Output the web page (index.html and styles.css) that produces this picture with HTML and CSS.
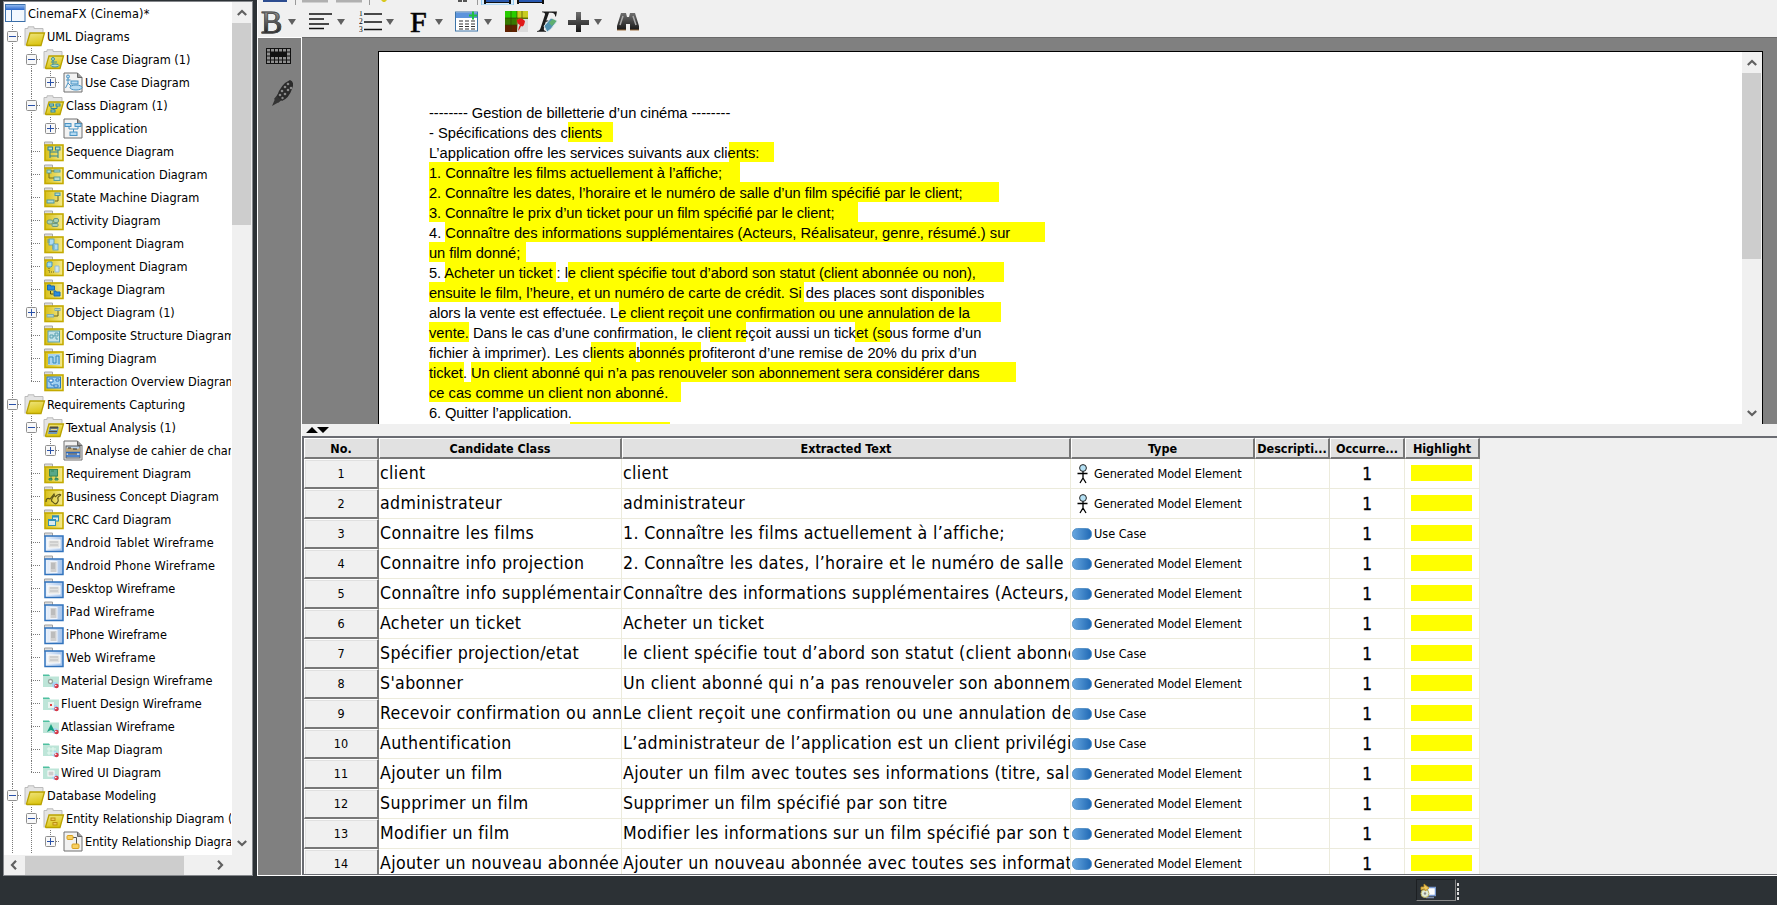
FILE: index.html
```
<!DOCTYPE html>
<html lang="fr">
<head>
<meta charset="utf-8">
<title>CinemaFX</title>
<link rel="stylesheet" href="styles.css">
</head>
<body>
<svg class="defs" width="0" height="0" aria-hidden="true">
  <defs>
    <linearGradient id="gy" x1="0" x2="1"><stop offset="0" stop-color="#d8c018"/><stop offset="1" stop-color="#f4ea90"/></linearGradient>
    <linearGradient id="gyo" x1="0" y1="0" x2="0.3" y2="1"><stop offset="0" stop-color="#efe580"/><stop offset="1" stop-color="#dcc616"/></linearGradient>
    <linearGradient id="gb" x1="0" x2="1"><stop offset="0" stop-color="#f0f5fc"/><stop offset="1" stop-color="#a3c2ea"/></linearGradient>
    <linearGradient id="gbl" x1="0" x2="1"><stop offset="0" stop-color="#68a8e0"/><stop offset="1" stop-color="#1f68b4"/></linearGradient>
    <linearGradient id="gw" x1="0" x2="0" y1="0" y2="1"><stop offset="0" stop-color="#8fb8f0"/><stop offset="1" stop-color="#2866cc"/></linearGradient>
    <linearGradient id="gk" x1="0" x2="0" y1="0" y2="1"><stop offset="0" stop-color="#707070"/><stop offset="1" stop-color="#181818"/></linearGradient>
  </defs>
  <symbol id="folder" viewBox="0 0 22 22"><path d="M1.5 4.500v-3.500h8v3.500z" fill="#ddd" stroke="#a8a8a8"/><rect x="2" y="4" width="18" height="15.500" fill="url(#gy)" stroke="#c4aa00" stroke-width="1.600"/></symbol>
  <symbol id="bfolder" viewBox="0 0 22 22"><path d="M1.500 4.500v-3.500h8v3.500z" fill="#ddd" stroke="#a0a0a0"/><rect x="2" y="4" width="18" height="15.500" fill="url(#gb)" stroke="#3173bd" stroke-width="1.500"/></symbol>
  <symbol id="open" viewBox="0 0 22 22"><path d="M1 19.500V2.500h3V.8h6v1.700h9V8" fill="#e4e4e4" stroke="#bcbcbc"/><path d="M2.500 19 6 7h14.500L17 19.500H3z" fill="url(#gyo)" stroke="#b9a200" stroke-width="1.300"/></symbol>
  <symbol id="doc" viewBox="0 0 22 22"><path d="M1 1h13.500L19 5.500V20H1z" fill="#f2f2f2" stroke="#707070"/><path d="M14.500 1v4.500H19" fill="#999" stroke="#666"/></symbol>
  <symbol id="green" viewBox="0 0 18 18"><path d="M0 3h6l1 1.500h9V15H0z" fill="#bde5d8"/><path d="M0 2.500h6l1 1.500H0z" fill="#4fc0a0"/><path d="M9 11q5-3 7 3-4 4-7 0z" fill="#a8d4f4"/><circle cx="13.500" cy="14" r="2.200" fill="#d83848"/><circle cx="12.800" cy="13.500" r=".8" fill="#fff"/></symbol>
  <symbol id="proj" viewBox="0 0 22 22"><rect x=".5" y="1.500" width="19.500" height="17" fill="#f2f8ff" stroke="#3a6ea8"/><rect x="1" y="2" width="18.500" height="5" fill="url(#gw)"/><path d="M6.500 7v11" stroke="#3a6ea8"/></symbol>
  <symbol id="minus" viewBox="0 0 11 11"><rect x=".5" y=".5" width="10" height="10" rx="1" fill="#f8f8f8" stroke="#8f8f8f"/><path d="M2 5.500h7" stroke="#2850a8"/></symbol>
  <symbol id="plus" viewBox="0 0 11 11"><rect x=".5" y=".5" width="10" height="10" rx="1" fill="#f8f8f8" stroke="#8f8f8f"/><path d="M2 5.500h7M5.500 2v7" stroke="#2850a8"/></symbol>
  <symbol id="o-uc" viewBox="0 0 22 22"><g fill="#b8dcf2" stroke="#4a94c4"><circle cx="5" cy="4.500" r="1.500"/><path d="M5 6v5M3 8h4.500M5 11l-2.500 5M5 11l3 3M8 10h6" fill="none"/><ellipse cx="13" cy="15.500" rx="6" ry="2.500"/><rect x="8" y="9" width="7" height="3"/></g></symbol>
  <symbol id="o-cls" viewBox="0 0 22 22"><g fill="#b4daf2" stroke="#4a94c4"><path d="M6 8v3h9V8M10.500 11v4" fill="none"/><rect x="2" y="5.500" width="6" height="3"/><rect x="12" y="5.500" width="6" height="3"/><rect x="7" y="14" width="7" height="3.500"/></g></symbol>
  <symbol id="o-ucf" viewBox="0 0 22 22"><g fill="#b8dcc4" stroke="#3c90a0"><circle cx="10" cy="10" r="1.500"/><path d="M10 11.500v4M8 13h6" fill="none"/><ellipse cx="12" cy="16.500" rx="4" ry="1.500"/></g></symbol>
  <symbol id="o-clsf" viewBox="0 0 22 22"><g fill="#b8dcc4" stroke="#2c84a0"><path d="M8 11v2.500h6V11M11 13v3" fill="none"/><rect x="6.500" y="9" width="4" height="2"/><rect x="13" y="9" width="4" height="2"/><rect x="8" y="15" width="4" height="2"/></g></symbol>
  <symbol id="o-seq" viewBox="0 0 22 22"><g fill="#b8dccc" stroke="#2c8098"><rect x="5" y="6" width="4.500" height="3"/><rect x="12.500" y="6" width="4.500" height="3"/><path d="M7 9v8M15 9v8M7 11h8M7 15h8" fill="none"/></g></symbol>
  <symbol id="o-com" viewBox="0 0 22 22"><g fill="#b8dcd0" stroke="#54a0a0"><rect x="4" y="6" width="4" height="3"/><rect x="11" y="6" width="6" height="2"/><rect x="11" y="13" width="6" height="3.500"/><path d="M6 9v5h5M8 7h3" fill="none" stroke="#77701c"/></g></symbol>
  <symbol id="o-st" viewBox="0 0 22 22"><g fill="#b8dcd0" stroke="#4a98a8"><rect x="12" y="6" width="5" height="2.500"/><rect x="4" y="13" width="7" height="3"/><path d="M15 9v5h-3" fill="none" stroke="#666018"/></g></symbol>
  <symbol id="o-act" viewBox="0 0 22 22"><g fill="#a8d0b8" stroke="#6a9880"><rect x="4" y="10" width="6" height="4" rx="2"/><rect x="10.500" y="8.500" width="5" height="4" rx="1.500"/><rect x="9" y="13.500" width="6" height="3" rx="1"/></g></symbol>
  <symbol id="o-cmp" viewBox="0 0 22 22"><g fill="#b0dcf0" stroke="#5098b8" stroke-width=".8"><rect x="6" y="6" width="5" height="6"/><rect x="10" y="11" width="5" height="6"/><path d="M4 7h3M4 9h3M9 13h3M9 15h3"/></g></symbol>
  <symbol id="o-dep" viewBox="0 0 22 22"><g fill="#a0dcec" stroke="#4a98b8"><path d="M4 7l1-1h4v4l-1 1H4z"/><path d="M12 10h4v6h-4z" stroke="#98bcd0" fill="#d0e8f4"/><path d="M6 12v4h6" fill="none" stroke="#666018" stroke-dasharray="1 1"/></g></symbol>
  <symbol id="o-pkg" viewBox="0 0 22 22"><g fill="#2c8cdc" stroke="#1868b0"><path d="M4.500 6h3v1h4v4h-7zM11 12h2v1h4v4h-6z"/><path d="M7.500 12v3h3" fill="none" stroke="#504c10"/></g></symbol>
  <symbol id="o-obj" viewBox="0 0 22 22"><g fill="#b0d4cc" stroke="#80acb0"><rect x="12" y="6.500" width="5" height="2"/><rect x="4" y="12.500" width="6.500" height="2.500"/><path d="M15 9v5h-4" fill="none" stroke="#666018"/></g></symbol>
  <symbol id="o-cst" viewBox="0 0 22 22"><g fill="#c4e2e8" stroke="#58a0b0"><rect x="5" y="6" width="11.500" height="11"/><path d="M7 10h3v3H7zM12 8h3v3h-3zM12 13h2v2M10 11h2"/></g></symbol>
  <symbol id="o-tim" viewBox="0 0 22 22"><rect x="5" y="6" width="12" height="11" fill="#a8d4f0"/><path d="M6 16V9h4v6h3V8h3v8" fill="none" stroke="#3488b8"/></symbol>
  <symbol id="o-int" viewBox="0 0 22 22"><rect x="4" y="6" width="13.500" height="11" fill="#a0d0f0" stroke="#2878c0"/><path d="M6 8h4v3H6zM13 8h3v2h-3zM11 14h4v2h-4zM8 11v3h3" fill="#fff" stroke="#2878c0"/></symbol>
  <symbol id="o-txf" viewBox="0 0 22 22"><path d="M6.500 10h9.500l-2 7H5z" fill="#7098b8"/><path d="M7 9.500h8v2H6.500zM6 14h8v1H6z" fill="#504c40"/><path d="M8 12.500h6" stroke="#e8d890"/></symbol>
  <symbol id="o-tx" viewBox="0 0 22 22"><rect x="3" y="6" width="14" height="12" fill="#bcd4ee" stroke="#555"/><path d="M3 9c4-4 8 2 14-1v4H3z" fill="#c0a878"/><path d="M3 12.500h14M3 16h14" stroke="#2868c0" stroke-width="1.500"/><path d="M5 8h3M10 9h4M5 14h9" stroke="#333"/></symbol>
  <symbol id="o-req" viewBox="0 0 22 22"><g fill="#58a888" stroke="#388858"><rect x="6.500" y="6.500" width="8" height="6.500"/><path d="M8 13v2M13 13v2M6 15.500h3v1.500H6zM12 15.500h3v1.500h-3zM8 8h3"/></g></symbol>
  <symbol id="o-bus" viewBox="0 0 22 22"><path d="M3 16q0-5 4-3l4-5q1 2-1 3-3 4 0 5M12 11q4-4 6-2M18 9q-4 2-3 4t-1 4-4-1" fill="none" stroke="#5c5418" stroke-width="1.200"/></symbol>
  <symbol id="o-crc" viewBox="0 0 22 22"><g fill="#d8eaf0" stroke="#3090b8"><rect x="9.500" y="7" width="6" height="5"/><rect x="5.500" y="10.500" width="7" height="6"/><path d="M9 7.500h7M5 11h8" stroke-width="2"/></g></symbol>
  <symbol id="o-w1" viewBox="0 0 22 22"><rect x="5" y="8" width="12" height="8" fill="#e2e2e0" stroke="#fff"/><path d="M7 10h8M7 13h8" stroke="#bcbcbc"/></symbol>
  <symbol id="o-w2" viewBox="0 0 22 22"><rect x="7" y="6.500" width="7" height="11" fill="#d0d0d0" stroke="#f0f4fa"/><path d="M8 9h4M8 11h4M8 13h4" stroke="#a8a8a8"/></symbol>
  <symbol id="o-m" viewBox="0 0 18 18"><circle cx="7.500" cy="9.500" r="2" fill="#fff" stroke="#98a8a0" stroke-width="1.300"/></symbol>
  <symbol id="o-f" viewBox="0 0 18 18"><rect x="5" y="7" width="6" height="6" fill="#e8f4f0"/><rect x="7" y="9" width="2" height="2" fill="#e04040"/></symbol>
  <symbol id="o-a" viewBox="0 0 18 18"><path d="M4 14l4-8 4 8-4-2z" fill="#18a080"/></symbol>
  <symbol id="o-s" viewBox="0 0 18 18"><path d="M6 6v8M10 6v8M4 8h9M4 12h9" stroke="#e4f8f0"/></symbol>
  <symbol id="o-wi" viewBox="0 0 18 18"><rect x="5" y="7" width="6" height="5" fill="#ccc" stroke="#fff"/></symbol>
  <symbol id="o-erf" viewBox="0 0 22 22"><g fill="#ecca60" stroke="#bc9010"><rect x="8" y="10" width="4" height="2.500"/><rect x="10" y="14.500" width="4" height="2.500"/></g></symbol>
  <symbol id="o-er" viewBox="0 0 22 22"><g fill="#f8d060" stroke="#d8a020"><path d="M10 6.500h3.500V13" fill="none" stroke="#555"/><rect x="4" y="4.500" width="6" height="4" rx="1"/><rect x="9" y="13" width="7" height="4.500" rx="1"/></g></symbol>
  <symbol id="actor" viewBox="0 0 20 20"><circle cx="11" cy="4" r="3.400" fill="#b4e0f4" stroke="#222"/><path d="M11 7.500v7M5.500 9.500h10M11 14l-3 5M11 14l3 5" stroke="#000" stroke-width="1.300" fill="none"/></symbol>
  <symbol id="oval" viewBox="0 0 20 20"><rect x=".5" y="4.500" width="19" height="11" rx="5" fill="url(#gbl)" stroke="#4888c0" stroke-width=".8"/></symbol>
  <symbol id="dd" viewBox="0 0 8 6"><path d="M0 0h8L4 6z" fill="#606060"/></symbol>
  <symbol id="up" viewBox="0 0 10 8"><path d="M.8 6 5 2l4.200 4" fill="none" stroke="#606060" stroke-width="2.200"/></symbol>
  <symbol id="down" viewBox="0 0 10 8"><path d="M.8 2 5 6l4.200-4" fill="none" stroke="#606060" stroke-width="2.200"/></symbol>
</svg>

<div class="app">
  <div class="work">
    <aside class="side">
      <div class="side-top">
        <ul class="tree">
          <li class="root"><svg><use href="#proj"/></svg>CinemaFX (Cinema)*</li>
          <li><i class="x"><svg><use href="#minus"/></svg></i><svg><use href="#open"/></svg>UML Diagrams</li>
          <li><i class="v"></i><i class="x"><svg><use href="#minus"/></svg></i><svg><use href="#open"/><use href="#o-ucf"/></svg>Use Case Diagram (1)</li>
          <li><i class="v"></i><i class="v"></i><i class="x last"><svg><use href="#plus"/></svg></i><svg class="doc"><use href="#doc"/><use href="#o-uc"/></svg>Use Case Diagram</li>
          <li><i class="v"></i><i class="x"><svg><use href="#minus"/></svg></i><svg><use href="#open"/><use href="#o-clsf"/></svg>Class Diagram (1)</li>
          <li><i class="v"></i><i class="v"></i><i class="x last"><svg><use href="#plus"/></svg></i><svg class="doc"><use href="#doc"/><use href="#o-cls"/></svg>application</li>
          <li><i class="v"></i><i class="t"></i><svg><use href="#folder"/><use href="#o-seq"/></svg>Sequence Diagram</li>
          <li><i class="v"></i><i class="t"></i><svg><use href="#folder"/><use href="#o-com"/></svg>Communication Diagram</li>
          <li><i class="v"></i><i class="t"></i><svg><use href="#folder"/><use href="#o-st"/></svg>State Machine Diagram</li>
          <li><i class="v"></i><i class="t"></i><svg><use href="#folder"/><use href="#o-act"/></svg>Activity Diagram</li>
          <li><i class="v"></i><i class="t"></i><svg><use href="#folder"/><use href="#o-cmp"/></svg>Component Diagram</li>
          <li><i class="v"></i><i class="t"></i><svg><use href="#folder"/><use href="#o-dep"/></svg>Deployment Diagram</li>
          <li><i class="v"></i><i class="t"></i><svg><use href="#folder"/><use href="#o-pkg"/></svg>Package Diagram</li>
          <li><i class="v"></i><i class="x"><svg><use href="#plus"/></svg></i><svg><use href="#folder"/><use href="#o-obj"/></svg>Object Diagram (1)</li>
          <li><i class="v"></i><i class="t"></i><svg><use href="#folder"/><use href="#o-cst"/></svg>Composite Structure Diagram</li>
          <li><i class="v"></i><i class="t"></i><svg><use href="#folder"/><use href="#o-tim"/></svg>Timing Diagram</li>
          <li><i class="v"></i><i class="t last"></i><svg><use href="#folder"/><use href="#o-int"/></svg>Interaction Overview Diagram</li>
          <li><i class="x"><svg><use href="#minus"/></svg></i><svg><use href="#open"/></svg>Requirements Capturing</li>
          <li><i class="v"></i><i class="x"><svg><use href="#minus"/></svg></i><svg><use href="#open"/><use href="#o-txf"/></svg>Textual Analysis (1)</li>
          <li><i class="v"></i><i class="v"></i><i class="x last"><svg><use href="#plus"/></svg></i><svg class="doc"><use href="#doc"/><use href="#o-tx"/></svg>Analyse de cahier de charge</li>
          <li><i class="v"></i><i class="t"></i><svg><use href="#folder"/><use href="#o-req"/></svg>Requirement Diagram</li>
          <li><i class="v"></i><i class="t"></i><svg><use href="#folder"/><use href="#o-bus"/></svg>Business Concept Diagram</li>
          <li><i class="v"></i><i class="t"></i><svg><use href="#folder"/><use href="#o-crc"/></svg>CRC Card Diagram</li>
          <li class="wide"><i class="v"></i><i class="t"></i><svg><use href="#bfolder"/><use href="#o-w1"/></svg>Android Tablet Wireframe</li>
          <li class="wide"><i class="v"></i><i class="t"></i><svg><use href="#bfolder"/><use href="#o-w2"/></svg>Android Phone Wireframe</li>
          <li><i class="v"></i><i class="t"></i><svg><use href="#bfolder"/><use href="#o-w1"/></svg>Desktop Wireframe</li>
          <li class="wide"><i class="v"></i><i class="t"></i><svg><use href="#bfolder"/><use href="#o-w2"/></svg>iPad Wireframe</li>
          <li><i class="v"></i><i class="t"></i><svg><use href="#bfolder"/><use href="#o-w2"/></svg>iPhone Wireframe</li>
          <li class="wide"><i class="v"></i><i class="t"></i><svg><use href="#bfolder"/><use href="#o-w1"/></svg>Web Wireframe</li>
          <li><i class="v"></i><i class="t"></i><svg class="sm"><use href="#green"/><use href="#o-m"/></svg>Material Design Wireframe</li>
          <li><i class="v"></i><i class="t"></i><svg class="sm"><use href="#green"/><use href="#o-f"/></svg>Fluent Design Wireframe</li>
          <li><i class="v"></i><i class="t"></i><svg class="sm"><use href="#green"/><use href="#o-a"/></svg>Atlassian Wireframe</li>
          <li><i class="v"></i><i class="t"></i><svg class="sm"><use href="#green"/><use href="#o-s"/></svg>Site Map Diagram</li>
          <li><i class="v"></i><i class="t last"></i><svg class="sm"><use href="#green"/><use href="#o-wi"/></svg>Wired UI Diagram</li>
          <li><i class="x"><svg><use href="#minus"/></svg></i><svg><use href="#open"/></svg>Database Modeling</li>
          <li><i class="v"></i><i class="x"><svg><use href="#minus"/></svg></i><svg><use href="#open"/><use href="#o-erf"/></svg>Entity Relationship Diagram (1)</li>
          <li><i class="v"></i><i class="v"></i><i class="x last"><svg><use href="#plus"/></svg></i><svg class="doc"><use href="#doc"/><use href="#o-er"/></svg>Entity Relationship Diagram</li>
        </ul>
        <div class="vbar"><svg><use href="#up"/></svg><span class="thumb"></span><svg><use href="#down"/></svg></div>
      </div>
      <div class="hbar"><svg class="left"><use href="#up"/></svg><span class="thumb"></span><svg class="right"><use href="#up"/></svg></div>
    </aside>

    <main class="main">
      <header class="tools">
        <svg class="cut" width="400" height="5" viewBox="0 0 400 5">
          <path d="M5 0h24v2H5z" fill="#2c4c90"/><path d="M37.500 0v5M111.500 0v5M219.500 0v5" stroke="#999"/>
          <path d="M44 0h26v2.500H44zM78 0h26v2.500H78z" fill="#b0b0b0"/><path d="M123 0h6l-2 2h-2z" fill="#d8c820"/><path d="M200 0h4v2h-4zM205 0h4v2h-4z" fill="#555"/>
          <path d="M223.500-1h32v6h-32z" fill="#d8ecfc" stroke="#90c8f0"/><path d="M226 0h2v4h-2zM251 0h2v4h-2zM226 2h27v1h-27zM259 0h2v4h-2zM284 0h2v4h-2zM259 2h27v1h-27z" fill="#111"/><path d="M228 0h23v2h-23zM261 0h23v2h-23z" fill="#2858b0"/>
        </svg>
        <div class="bar">
          <span class="ch bold">B</span><svg class="dd"><use href="#dd"/></svg>
          <svg viewBox="0 0 24 22"><path d="M0 3h23M0 8h15M0 13h20M0 17.500h15" stroke="#111" stroke-width="1.700"/></svg><svg class="dd"><use href="#dd"/></svg>
          <svg viewBox="0 0 24 22"><path d="M5 3h18M5 11h18M5 18.500h18" stroke="#111" stroke-width="1.700"/><g font-family="Liberation Serif" font-size="7.500"><text x="0" y="5">1</text><text x="0" y="13">2</text><text x="0" y="21">3</text></g></svg><svg class="dd"><use href="#dd"/></svg>
          <span class="ch eff">F</span><svg class="dd"><use href="#dd"/></svg>
          <svg viewBox="0 0 24 22"><rect x=".5" y="1" width="22" height="19" fill="#fff" stroke="#3c74a8"/><path d="M1 1.500h21v5.500H1z" fill="#5c94dc"/><path d="M4 10h16M4 13h16M4 15.500h16M4 18h16" stroke="#333" stroke-width="1.200" stroke-dasharray="4 2"/><path d="M18 .5v8M14 4.500h8" stroke="#20c040" stroke-width="2"/></svg><svg class="dd"><use href="#dd"/></svg>
          <svg viewBox="0 0 24 22"><path d="M0 0h23v21H0z" fill="#6a8c00"/><path d="M0 0h12v7H0z" fill="#28cc00"/><path d="M12 0h11v7H12z" fill="#c8cc20"/><path d="M0 14h12v7H0z" fill="#602000"/><path d="M0 7h11v7H0z" fill="#387800"/><path d="M0 7h23M0 14h12M6 0v21M12 0v21M17 0v7" stroke="#303800" stroke-width=".6"/><path d="M13 8h10v13H12z" fill="#dcdcdc"/><path d="M12 9q4-4 8 1-1 7-4 5-1 3-3 5 1-5 2-6-3-1-3-5z" fill="#e01818"/></svg>
          <svg viewBox="0 0 24 22"><path d="M5 .5h15l-1 5h-.8q0-3.800-4-3.800h-2.200L9.300 9.500h4v1.200H8.800L7 17q-.8 2.500 2 3v.7H0V20q2.800 0 3.600-3L8 3.500Q8.300 1.500 5 1.300z" fill="#1c1c1c"/><path d="M7 15l7-8 6 3-6 8-4 3z" fill="#5090b0" stroke="#d8e4e8"/><path d="M12 12l3.500-4 4 2-4.500 5z" fill="#60b070"/></svg>
          <svg viewBox="0 0 24 22"><path d="M9 1h5v8h8v5h-8v7H9v-7H1V9h8z" fill="url(#gk)"/></svg><svg class="dd"><use href="#dd"/></svg>
          <svg viewBox="0 0 24 22"><path d="M5 2h5l1 4h2l1-4h5l4 13v4h-9v-6h-4v6H1v-4z" fill="url(#gk)"/><path d="M7 5 4 14M17 5l3 9" stroke="#aaa" stroke-width="1.500"/><path d="M1 19h9M14 19h9" stroke="#a07040"/></svg>
        </div>
      </header>

      <div class="body">
        <nav class="rail">
          <svg width="25" height="16" viewBox="0 0 25 16"><rect x=".5" y=".5" width="24" height="15" fill="#909090" stroke="#111"/><path d="M0 4h25M0 8h25M0 12h25M4.500 0v16M8.500 0v16M12.500 0v16M16.500 0v16M20.500 0v16" stroke="#111"/><path d="M5 4h16v5H5z" fill="#111"/></svg>
          <svg width="25" height="28" viewBox="0 0 25 28"><path d="M4 27l3-7 4 3zM6 20l4-5 5 5-5 4z" fill="#333"/><path d="M9 17Q13 5 22 1q5 2 2 9-3 9-10 12z" fill="#2a2a2a"/><g fill="#888"><circle cx="20" cy="5" r="1.300"/><circle cx="23" cy="9" r="1.300"/><circle cx="17" cy="8" r="1.300"/><circle cx="20" cy="11" r="1.300"/><circle cx="14" cy="12" r="1.300"/><circle cx="17" cy="15" r="1.300"/><circle cx="12" cy="16" r="1.300"/><circle cx="14.500" cy="19" r="1.200"/></g></svg>
        </nav>
        <div class="editor">
          <section class="canvas">
            <div class="page">
              <div class="text">
                <p class="s2"><span>-------- Gestion de billetterie d’un cinéma --------</span></p>
                <p><mark style="--x:139px;--w:45px"></mark><span>- Spécifications des clients</span></p>
                <p><mark style="--x:300px;--w:45px"></mark><span>L’application offre les services suivants aux clients:</span></p>
                <p class="s2"><mark style="--x:0px;--w:311px"></mark><span>1. Connaître les films actuellement à l’affiche;</span></p>
                <p class="s4"><mark style="--x:0px;--w:570px"></mark><span>2. Connaître les dates, l’horaire et le numéro de salle d’un film spécifié par le client;</span></p>
                <p class="s5"><mark style="--x:0px;--w:429px"></mark><span>3. Connaître le prix d’un ticket pour un film spécifié par le client;</span></p>
                <p><mark style="--x:16px;--w:600px"></mark><span>4. Connaître des informations supplémentaires (Acteurs, Réalisateur, genre, résumé.) sur</span></p>
                <p class="s4"><mark style="--x:0px;--w:97px"></mark><span>un film donné;</span></p>
                <p class="s3"><mark style="--x:16px;--w:111px"></mark><mark style="--x:139px;--w:436px"></mark><span>5. Acheter un ticket : le client spécifie tout d’abord son statut (client abonnée ou non),</span></p>
                <p class="s2"><mark style="--x:0px;--w:375px"></mark><span>ensuite le film, l’heure, et un numéro de carte de crédit. Si des places sont disponibles</span></p>
                <p class="s4"><mark style="--x:190px;--w:382px"></mark><span>alors la vente est effectuée. Le client reçoit une confirmation ou une annulation de la</span></p>
                <p class="s1"><mark style="--x:0px;--w:40px"></mark><mark style="--x:281px;--w:36px"></mark><mark style="--x:426px;--w:35px"></mark><span>vente. Dans le cas d’une confirmation, le client reçoit aussi un ticket (sous forme d’un</span></p>
                <p><mark style="--x:162px;--w:45px"></mark><mark style="--x:211px;--w:61px"></mark><span>fichier à imprimer). Les clients abonnés profiteront d’une remise de 20% du prix d’un</span></p>
                <p class="s3"><mark style="--x:0px;--w:35px"></mark><mark style="--x:42px;--w:545px"></mark><span>ticket. Un client abonné qui n’a pas renouveler son abonnement sera considérer dans</span></p>
                <p><mark style="--x:0px;--w:252px"></mark><span>ce cas comme un client non abonné.</span></p>
                <p class="s5"><span>6. Quitter l’application.</span></p>
                <p><mark style="--x:141px;--w:100px"></mark></p>
              </div>
              <div class="vbar"><svg><use href="#up"/></svg><span class="thumb"></span><svg><use href="#down"/></svg></div>
            </div>
          </section>
          <div class="split"><svg width="24" height="6" viewBox="0 0 24 6"><path d="M0 6h12L6 0zM11 0h12l-6 6z"/></svg></div>
          <section class="grid">
            <div class="tr th"><span>No.</span><span>Candidate Class</span><span>Extracted Text</span><span>Type</span><span>Descripti...</span><span>Occurre...</span><span>Highlight</span></div>
            <div class="tr"><b>1</b><span>client</span><span>client</span><em><svg><use href="#actor"/></svg>Generated Model Element</em><span></span><strong>1</strong><u></u></div>
            <div class="tr"><b>2</b><span>administrateur</span><span>administrateur</span><em><svg><use href="#actor"/></svg>Generated Model Element</em><span></span><strong>1</strong><u></u></div>
            <div class="tr"><b>3</b><span>Connaitre les films</span><span>1. Connaître les films actuellement à l’affiche;</span><em><svg><use href="#oval"/></svg>Use Case</em><span></span><strong>1</strong><u></u></div>
            <div class="tr"><b>4</b><span>Connaitre info projection</span><span>2. Connaître les dates, l’horaire et le numéro de salle</span><em><svg><use href="#oval"/></svg>Generated Model Element</em><span></span><strong>1</strong><u></u></div>
            <div class="tr"><b>5</b><span>Connaître info supplémentaires</span><span>Connaître des informations supplémentaires (Acteurs,</span><em><svg><use href="#oval"/></svg>Generated Model Element</em><span></span><strong>1</strong><u></u></div>
            <div class="tr"><b>6</b><span>Acheter un ticket</span><span>Acheter un ticket</span><em><svg><use href="#oval"/></svg>Generated Model Element</em><span></span><strong>1</strong><u></u></div>
            <div class="tr"><b>7</b><span>Spécifier projection/etat</span><span>le client spécifie tout d’abord son statut (client abonnée</span><em><svg><use href="#oval"/></svg>Use Case</em><span></span><strong>1</strong><u></u></div>
            <div class="tr"><b>8</b><span>S'abonner</span><span>Un client abonné qui n’a pas renouveler son abonnement</span><em><svg><use href="#oval"/></svg>Generated Model Element</em><span></span><strong>1</strong><u></u></div>
            <div class="tr"><b>9</b><span>Recevoir confirmation ou annulation</span><span>Le client reçoit une confirmation ou une annulation de la</span><em><svg><use href="#oval"/></svg>Use Case</em><span></span><strong>1</strong><u></u></div>
            <div class="tr"><b>10</b><span>Authentification</span><span>L’administrateur de l’application est un client privilégié</span><em><svg><use href="#oval"/></svg>Use Case</em><span></span><strong>1</strong><u></u></div>
            <div class="tr"><b>11</b><span>Ajouter un film</span><span>Ajouter un film avec toutes ses informations (titre, salle</span><em><svg><use href="#oval"/></svg>Generated Model Element</em><span></span><strong>1</strong><u></u></div>
            <div class="tr"><b>12</b><span>Supprimer un film</span><span>Supprimer un film spécifié par son titre</span><em><svg><use href="#oval"/></svg>Generated Model Element</em><span></span><strong>1</strong><u></u></div>
            <div class="tr"><b>13</b><span>Modifier un film</span><span>Modifier les informations sur un film spécifié par son titre</span><em><svg><use href="#oval"/></svg>Generated Model Element</em><span></span><strong>1</strong><u></u></div>
            <div class="tr"><b>14</b><span>Ajouter un nouveau abonnée</span><span>Ajouter un nouveau abonnée avec toutes ses informations</span><em><svg><use href="#oval"/></svg>Generated Model Element</em><span></span><strong>1</strong><u></u></div>
          </section>
        </div>
      </div>
    </main>
  </div>
  <footer class="status">
    <div class="slot"><svg width="16" height="16" viewBox="0 0 16 16"><rect x="7.500" y="4.500" width="8" height="8" fill="#fff" stroke="#7898d0" stroke-width="1.500"/><path d="M6 14.500h8" stroke="#8090b0" stroke-width="1.500"/><circle cx="5" cy="10.500" r="4" fill="#e0ecd8" stroke="#b8b060"/><circle cx="5" cy="10.500" r="1.200" fill="#888"/><path d="M1 7V4h3V1l5 4-4 3V6H3z" fill="#f0c860" stroke="#c09020" stroke-width=".8"/></svg></div>
    <div class="grip"></div>
  </footer>
</div>
</body>
</html>
```
FILE: styles.css
```
* { box-sizing: border-box; }
body { margin: 0; overflow: hidden; font-family: "DejaVu Sans Condensed", "DejaVu Sans", sans-serif; font-stretch: condensed; color: #000; }
.defs { position: absolute; }
svg { overflow: hidden; }
.app { width: 1777px; height: 905px; display: flex; flex-direction: column; background: #2c3135; overflow: hidden; }
.work { display: flex; height: 876px; padding-left: 3px; }

/* project tree */
.side { width: 250px; height: 875px; margin-top: 1px; border: 1px solid #84878b; background: #f0f0f0; display: flex; flex-direction: column; }
.side-top { display: flex; height: 853px; }
.tree { list-style: none; margin: 0; padding: 0; width: 228px; height: 853px; overflow: hidden; background: #fff; border-right: 1px solid #fff; font-size: 12.600px; }
.tree li { display: flex; align-items: center; height: 23px; width: 228px; overflow: hidden; margin-left: -1px; white-space: nowrap; letter-spacing: 0; }
.tree li.wide { letter-spacing: 0.180px; }
.tree li > svg { flex: none; width: 22px; height: 22px; margin: 0 1px 0 2px; }
.tree .root { letter-spacing: 0.150px; }
.tree .root > svg { margin-right: 1px; }
.tree li > svg.doc { margin: 0 0 0 3px; }
.tree li > svg.sm { width: 18px; height: 18px; margin: 0 0 0 2px; }
.tree i { flex: none; width: 19px; height: 23px; display: flex; align-items: center; padding-left: 4px; --dv: repeating-linear-gradient(#7a7a7a 0 1px, transparent 1px 2px); --dh: repeating-linear-gradient(90deg, #7a7a7a 0 1px, transparent 1px 2px); background: var(--dv) 9px 0 / 1px 23px no-repeat; }
.tree i.t, .tree i.x { background: var(--dv) 9px 0 / 1px 23px no-repeat, var(--dh) 9px 11px / 10px 1px no-repeat; }
.tree i.last { background: var(--dv) 9px 0 / 1px 12px no-repeat, var(--dh) 9px 11px / 10px 1px no-repeat; }
.tree i svg { width: 11px; height: 11px; }
.vbar { width: 20px; background: #f0f0f0; display: flex; flex-direction: column; align-items: center; padding-top: 7px; }
.vbar svg { width: 10px; height: 8px; flex: none; }
.vbar .thumb { width: 19px; height: 202px; margin: 6px 1px 0 0; background: #cdcdcd; }
.side .vbar svg:last-child { margin-top: 614px; }
.hbar { height: 20px; display: flex; align-items: center; padding-left: 5px; }
.hbar svg { width: 10px; height: 8px; }
.hbar .left { transform: rotate(-90deg); }
.hbar .right { transform: rotate(90deg); margin-left: 31px; }
.hbar .thumb { width: 159px; height: 19px; margin-left: 6px; background: #cdcdcd; }

/* main column */
.main { margin-left: 4px; width: 1520px; height: 876px; border-left: 1px solid #fff; border-bottom: 1px solid #fff; display: flex; flex-direction: column; background: #f0f0f0; }
.tools { height: 37px; display: flex; flex-direction: column; }
.cut { flex: none; display: block; }
.bar { display: grid; grid-template-columns: 27px 21px 28px 22px 27px 22px 27px 20px 29px 21px 32px 30px 27px 22px 24px; align-items: center; height: 32px; padding-left: 3px; margin-top: 1px; }
.bar svg { width: 24px; height: 22px; display: block; }
.bar svg.dd { width: 8px; height: 6px; }
.ch { font: 32px/30px "Liberation Serif", serif; -webkit-text-stroke: 0.700px #111; }
.bold { background: linear-gradient(#999 4px, #222 26px); -webkit-background-clip: text; color: transparent; -webkit-text-stroke: 0.800px #4a4a4a; }
.eff { padding-left: 2px; font-size: 30px; }
.body { display: flex; height: 838px; }
.rail { width: 44px; border-top: 1px solid #fff; border-right: 1px solid #fff; background: #808080; display: flex; flex-direction: column; gap: 15px; padding: 10px 0 0 8px; }
.rail svg { flex: none; }
.rail svg + svg { margin-left: 2px; }
.editor { width: 1475px; display: flex; flex-direction: column; }
.canvas { height: 387px; background: #808080; border-top: 1px solid #696969; padding: 13px 0 0 76px; }
.page { width: 1385px; height: 373px; border: 1px solid #000; border-bottom: 0; background: #fff; display: flex; justify-content: space-between; overflow: hidden; }
.text { width: 800px; padding: 50px 0 0 50px; }
.text p { position: relative; margin: 0; height: 20px; font: 14.700px/22px "Liberation Sans", Arial, sans-serif; white-space: nowrap; }
.text mark { position: absolute; left: var(--x); width: var(--w); top: 0; height: 20px; background: #ff0; }
.text span { position: relative; }
.text .s1 { letter-spacing: -0.013px; }
.text .s2 { letter-spacing: -0.045px; }
.text .s3 { letter-spacing: -0.066px; }
.text .s4 { letter-spacing: -0.078px; }
.text .s5 { letter-spacing: -0.100px; }
.page .vbar .thumb { height: 186px; margin-top: 6px; }
.page .vbar svg:last-child { margin-top: 150px; }
.split { height: 12px; padding: 3px 0 0 4px; background: #f0f0f0; }
.split svg { display: block; }

/* candidate table */
.grid { height: 439px; overflow: hidden; border: solid #6a6c72; border-width: 2px 0 1px 2px; background: #f0f0f0; }
.tr { display: grid; grid-template-columns: 75px 243px 449px 184px 75px 75px 75px; height: 30px; width: 1176px; background: #fff; }
.tr > * { border: solid #ecebdc; border-width: 0 1px 1px 0; overflow: hidden; white-space: nowrap; font-style: normal; font-weight: normal; text-decoration: none; }
.tr > span { font-size: 17.600px; line-height: 28px; padding-left: 1px; letter-spacing: 0.350px; }
.tr > b { font-size: 12.500px; line-height: 28px; text-align: center; background: #f0f0f0; border: solid; border-width: 1px 2px 2px 1px; border-color: #fff #777 #777 #fff; box-shadow: inset 1px 1px #e0e0e0; }
.tr > em { display: flex; align-items: center; gap: 2px; padding-left: 1px; font-size: 12.600px; letter-spacing: -0.030px; }
.tr > em svg { width: 20px; height: 20px; flex: none; }
.tr > strong { font-size: 17px; line-height: 31px; text-align: center; -webkit-text-stroke: 0.300px #000; }
.tr > u { display: flex; align-items: center; padding: 0 0 1px 6px; }
.tr > u::before { content: ""; width: 61px; height: 16px; background: #ff0; }
.th { height: 21px; }
.th > span { border: solid; border-width: 1px 2px 2px 1px; border-color: #fff #777 #777 #fff; background: #e1e1e1; font-size: 12.500px; font-weight: bold; line-height: 19px; text-align: center; padding: 0; letter-spacing: -0.030px; }

.status { height: 29px; display: flex; padding: 3px 0 0 1416px; gap: 1px; }
.slot { width: 40px; height: 22px; border: solid; border-width: 1px 1px 1px 1px; border-color: #1c1f22 #888 #888 #1c1f22; padding: 3px 0 0 3px; }
.grip { width: 2px; height: 18px; margin-top: 4px; background: repeating-linear-gradient(#ddd 0 3px, transparent 3px 4.500px); }
```
